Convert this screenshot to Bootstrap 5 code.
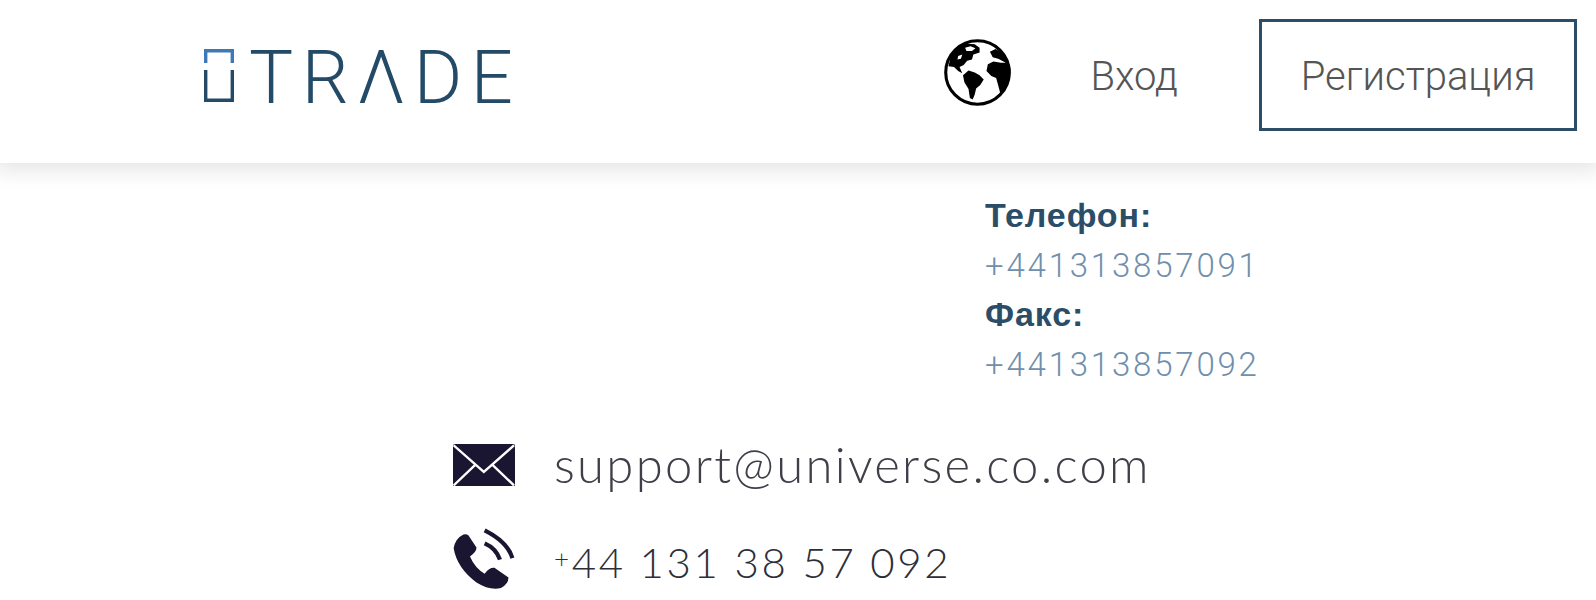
<!DOCTYPE html>
<html lang="ru">
<head>
  <meta charset="UTF-8">
  <meta name="viewport" content="width=device-width, initial-scale=1">
  <title>iTrade</title>
  <link href="https://cdn.jsdelivr.net/npm/bootstrap@5.3.3/dist/css/bootstrap.min.css" rel="stylesheet">
  <style>
    body {
      background-color: #fff;
      overflow: hidden;
    }
    .site-head {
      height: 163px;
      padding: 19px 19px 32px 204px;
      box-shadow: 0 3px 20px 5px rgba(0, 0, 0, .1);
    }
    .brand-mark {
      width: 30px;
      height: 54px;
      margin-top: 1px;
    }
    .brand-word {
      font-family: Roboto, "Liberation Sans", sans-serif;
      font-weight: 300;
      font-size: 74px;
      line-height: 54px;
      letter-spacing: 8.5px;
      color: #234a66;
      margin-left: 15px;
      padding-top: 5px;
    }
    .globe-icon {
      width: 67px;
      height: 67px;
      margin-right: 79px;
      margin-bottom: 6px;
    }
    .head-link {
      font-family: Roboto, "Liberation Sans", sans-serif;
      font-weight: 300;
      font-size: 40px;
      color: #555;
      text-decoration: none;
      padding-top: 3px;
    }
    .head-btn {
      width: 318px;
      height: 112px;
      margin-left: 81px;
      border: 3px solid #2b4d68;
      border-radius: 0;
      padding: 3px 0 0;
      font-family: Roboto, "Liberation Sans", sans-serif;
      font-weight: 300;
      font-size: 40px;
      color: #555;
    }
    .phone-block {
      padding: 28px 0 0 985px;
      font-size: 33px;
      line-height: 49.5px;
    }
    .phone-label {
      font-family: "Liberation Sans", sans-serif;
      font-size: 34px;
      font-weight: 700;
      color: #2b4d68;
      letter-spacing: .9px;
    }
    .phone-num {
      font-family: Roboto, "Liberation Sans", sans-serif;
      font-weight: 300;
      color: #6f8fad;
      letter-spacing: 2.8px;
    }
    .contact-list {
      margin-top: 45px;
      padding-left: 453px;
      gap: 32px;
    }
    .contact-row {
      height: 62px;
      gap: 39px;
    }
    .contact-icon {
      width: 62px;
      flex: none;
    }
    .contact-text {
      font-family: Lato, "Liberation Sans", sans-serif;
      font-weight: 300;
      font-size: 49px;
      letter-spacing: 2.3px;
      color: #3f3f49;
    }
    .contact-phone {
      font-size: 42px;
      letter-spacing: 2.6px;
      color: #2e2e38;
      padding-top: 6px;
    }
    .plus-sign {
      font-size: 26px;
      vertical-align: 10px;
    }
  </style>
</head>
<body>
  <header class="site-head d-flex align-items-center bg-white position-relative">
    <a class="d-flex align-items-center text-decoration-none" href="#">
      <svg class="brand-mark" viewBox="0 0 30 54" fill="none" stroke-width="3.4">
        <path d="M1.7 14V1.7H28.3V14" stroke="#3f78b5"/>
        <path d="M1.7 21V51.3H28.3V21" stroke="#234a66"/>
      </svg>
      <span class="brand-word">TRΛDE</span>
    </a>
    <div class="d-flex align-items-center ms-auto">
      <svg class="globe-icon" viewBox="43 43 194 194">
        <circle cx="140" cy="140" r="92" fill="#fff" stroke="#000" stroke-width="9"/>
        <path d="M56 122 62 95 78 72 105 56 132 58 146 68 146 82 128 88 124 102 110 106 100 118 88 124 96 142 84 136 72 124Z"/>
        <path d="M98 148 114 134 132 140 146 148 158 160 148 176 136 186 132 204 126 218 118 214 114 188 102 168Z"/>
        <path d="M176 80 192 72 214 84 228 104 236 130 234 160 222 186 206 200 200 178 194 156 180 150 166 136 170 116 186 108 208 112 222 112 200 100 184 96Z"/>
        <path d="M104 68 120 64 134 70 124 78 108 78ZM84 92 96 88 92 100 82 102Z" fill="#fff"/>
      </svg>
      <a class="head-link" href="#">Вход</a>
      <button class="btn head-btn" type="button">Регистрация</button>
    </div>
  </header>

  <div class="phone-block">
    <div class="phone-label">Телефон:</div>
    <div class="phone-num">+441313857091</div>
    <div class="phone-label">Факс:</div>
    <div class="phone-num">+441313857092</div>
  </div>

  <div class="contact-list d-flex flex-column">
    <div class="contact-row d-flex align-items-center">
      <svg class="contact-icon" viewBox="38 52 187 128">
        <rect x="38" y="52" width="187" height="128" rx="6" fill="#1a1530"/>
        <path d="M40 56 131 136 222 56M40 177 105 115M222 177 157 115" fill="none" stroke="#fff" stroke-width="7"/>
      </svg>
      <span class="contact-text">support@universe.co.com</span>
    </div>
    <div class="contact-row d-flex align-items-center">
      <svg class="contact-icon" viewBox="38 298 190 190">
        <path d="M70 318Q45 330 40 360 50 420 110 465 150 490 185 482 208 470 208 450L165 420Q150 418 135 438 105 420 90 385 110 372 110 358L85 320Q78 315 70 318Z" fill="#1a1530"/>
        <path d="M135 305Q205 340 220 390M135 345Q170 360 182 395" fill="none" stroke="#1a1530" stroke-width="13"/>
      </svg>
      <span class="contact-text contact-phone"><span class="plus-sign">+</span>44 131 38 57 092</span>
    </div>
  </div>

  <script src="https://cdn.jsdelivr.net/npm/bootstrap@5.3.3/dist/js/bootstrap.bundle.min.js"></script>
</body>
</html>
